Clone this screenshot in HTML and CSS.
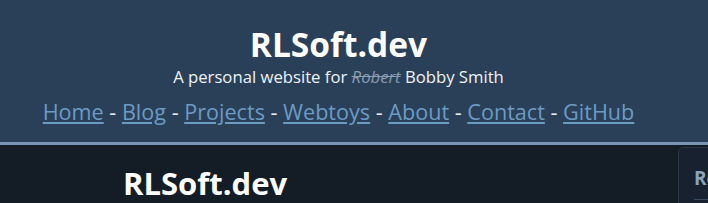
FILE: index.html
```html
<!DOCTYPE html>
<html lang="en">

<head>
    <meta charset="UTF-8">
    <meta name="viewport" content="width=device-width, initial-scale=1.0">
    <title>RLSoft.dev</title>
    <link rel="stylesheet" href="styles.css">
</head>

<body>
    <!-- 상단 헤더 -->
    <header class="site-header">
        <h1 class="site-title">RLSoft.dev</h1>
        <p class="site-tagline">A personal website for <s>Robert</s> Bobby Smith</p>
        <nav class="site-nav">
            <a href="#">Home</a> - <a href="#">Blog</a> - <a href="#">Projects</a> - <a href="#">Webtoys</a> -
            <a href="#">About</a> - <a href="#">Contact</a> - <a href="#">GitHub</a>
        </nav>
    </header>

    <div class="page">
        <main class="content">
            <h2 class="content-title">RLSoft.dev</h2>
        </main>

        <!-- 사이드바 -->
        <aside class="sidebar">
            <h3 class="sidebar-title">Recent</h3>
        </aside>
    </div>
</body>

</html>
```

FILE: styles.css
```css
* {
    box-sizing: border-box;
}

body {
    margin: 0;
    padding: 0;
    overflow-x: hidden;
    background-color: #141c26;
    color: #f2f5f8;
    font-family: "Open Sans", "Noto Sans", sans-serif;
}

.site-header {
    background-color: #2a4059;
    border-bottom: 3px solid #7896b4;
    text-align: center;
    padding: 22px 31px 14px 0;
}

.site-title {
    margin: 0;
    font-size: 33.5px;
    line-height: 44px;
    font-weight: 700;
    color: #ffffff;
}

.site-tagline {
    margin: 0;
    font-size: 16.7px;
    line-height: 22px;
    color: #eef2f6;
}

.site-tagline s {
    font-style: italic;
    color: #8b9cae;
}

.site-nav {
    margin-top: 8px;
    font-size: 21.6px;
    line-height: 32px;
    color: #e6ecf2;
}

.site-nav a {
    color: #6b9bc3;
}

.page {
    display: flex;
    flex-flow: row nowrap;
    justify-content: space-between;
}

.content {
    padding-left: 123px;
}

.content-title {
    margin: 17px 0 0;
    font-size: 31px;
    font-weight: 700;
    color: #ffffff;
}

.sidebar {
    flex: none;
    width: 260px;
    margin-right: -230px;
    margin-top: 2px;
    background-color: #172130;
    border: 1px solid #2a3748;
    border-radius: 5px;
    padding: 17px 15px;
}

.sidebar-title {
    margin: 0;
    padding-bottom: 8px;
    border-bottom: 1px solid #3a4c60;
    font-size: 19px;
    color: #8aa3be;
}
```
